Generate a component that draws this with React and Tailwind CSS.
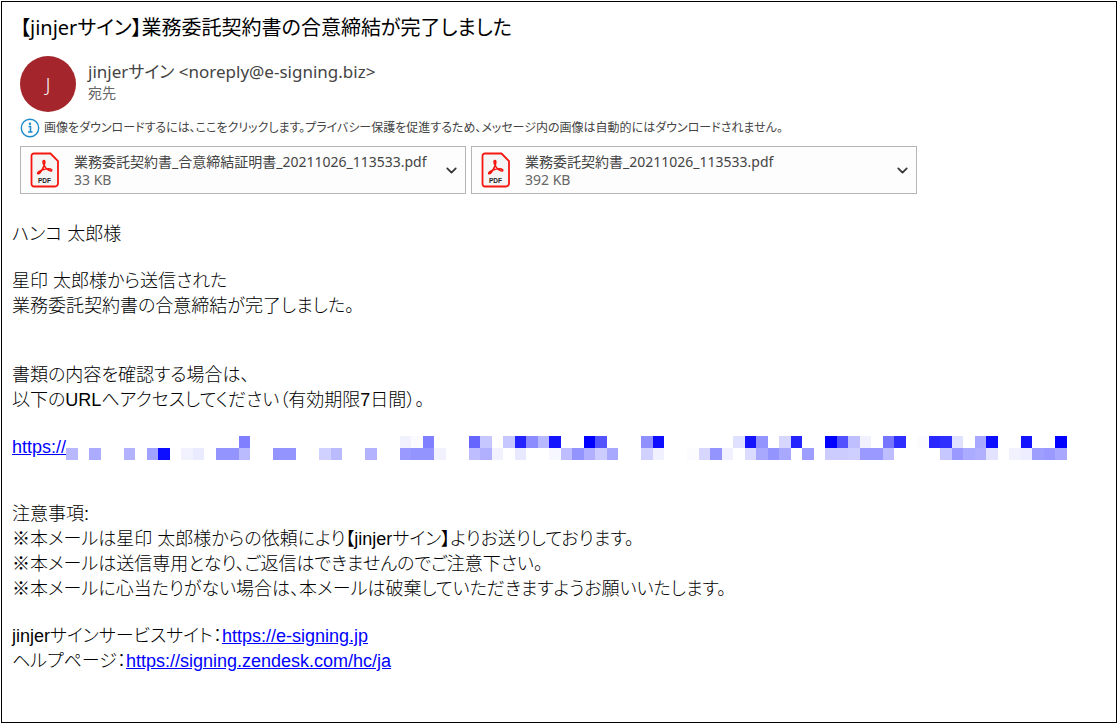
import { ChevronDown } from "lucide-react";

const attachments = [
    { name: "業務委託契約書_合意締結証明書_20211026_113533.pdf", size: "33 KB" },
    { name: "業務委託契約書_20211026_113533.pdf", size: "392 KB" },
];

// [column, opacity] for each masked cell of the signing URL
const maskTop = [
    [15, 0.5], [29, 0.05], [30, 0.02], [31, 0.5], [35, 0.6], [36, 0.22],
    [38, 0.22], [39, 0.86], [40, 0.45], [41, 0.28], [42, 0.92], [45, 1],
    [46, 0.67], [50, 0.44], [51, 0.95], [58, 0.12], [59, 0.92], [60, 0.42],
    [62, 0.16], [63, 0.86], [66, 1], [67, 0.68], [68, 0.25], [69, 0.06],
    [71, 0.54], [72, 0.82], [74, 0.01], [75, 0.84], [76, 0.82], [77, 0.12],
    [79, 0.34], [80, 0.95], [83, 0.92], [86, 1],
];

const maskBottom = [
    [0, 0.28], [2, 0.33], [5, 0.3], [7, 0.37], [8, 0.95], [10, 0.05],
    [11, 0.08], [13, 0.42], [14, 0.42], [15, 0.27], [18, 0.42], [19, 0.42],
    [22, 0.18], [23, 0.27], [26, 0.3], [29, 0.4], [30, 0.42], [31, 0.42],
    [32, 0.05], [35, 0.26], [36, 0.31], [37, 0.05], [39, 0.09], [42, 0.03],
    [43, 0.26], [44, 0.42], [45, 0.31], [46, 0.2], [47, 0.34], [50, 0.18],
    [51, 0.06], [54, 0.01], [55, 0.16], [56, 0.42], [57, 0.06], [59, 0.14],
    [60, 0.34], [61, 0.42], [62, 0.34], [64, 0.38], [66, 0.2], [67, 0.2],
    [68, 0.19], [69, 0.4], [70, 0.4], [71, 0.26], [76, 0.22], [77, 0.4],
    [78, 0.33], [79, 0.31], [80, 0.11], [82, 0.05], [83, 0.07], [84, 0.38],
    [85, 0.4], [86, 0.34],
];

const link = "text-[#0000ff] underline";

function PdfIcon() {
    return (
        <svg width="30" height="36" viewBox="0 0 30 36" fill="none" className="shrink-0" aria-hidden="true">
            <path
                d="M4 1.5h16.5L28 9v22.5a3 3 0 0 1-3 3H4a2.5 2.5 0 0 1-2.5-2.5V4A2.5 2.5 0 0 1 4 1.5Z"
                fill="#f5f5f5"
                stroke="#f5160f"
                strokeWidth="1.8"
            />
            <path
                d="M14 8.6c-1.6 0-1.2 2.6.6 5.6 1.6 2.7 4.6 5 6.4 4.8 1.6-.4.6-2.2-2.4-2.2-4 .1-9.6 1.9-10.8 3.9-.6 1.4 1.2 1.6 2.8-.7 2-2.9 4-7.2 4.200-9.600.1-1.200-.2-1.800-.8-1.800Z"
                stroke="#f5160f"
                strokeWidth="1.6"
                strokeLinejoin="round"
            />
            <text
                x="14.5"
                y="30.5"
                textAnchor="middle"
                fill="#222"
                fontSize="6.5"
                fontWeight="700"
                fontFamily="Liberation Sans, sans-serif"
            >
                PDF
            </text>
        </svg>
    );
}

function Attachment({ name, size }) {
    return (
        <li className="flex h-12 w-[446px] items-center border border-[#b5b5b5] bg-[#fdfdfd] pl-[9px]">
            <PdfIcon />
            <div className="ml-3.5 min-w-0 flex-1 pt-0.5 text-sm leading-[18px]">
                <p className="truncate text-[#444]">{name}</p>
                <p className="text-[#666]">{size}</p>
            </div>
            <button type="button" aria-label={`${name} のメニュー`} className="flex h-full w-7 items-center justify-center text-[#333]">
                <ChevronDown size={17} strokeWidth={2.4} />
            </button>
        </li>
    );
}

function MaskedUrl() {
    return (
        <svg
            viewBox="0 0 1001 24"
            className="h-6 w-[1001px] min-w-0"
            preserveAspectRatio="xMinYMid meet"
            fill="#0000ff"
            shapeRendering="crispEdges"
            aria-hidden="true"
        >
            {maskTop.map(([col, opacity]) => (
                <rect key={col} x={col * 11.5} y="0" width="11.5" height="12" opacity={opacity} />
            ))}
            {maskBottom.map(([col, opacity]) => (
                <rect key={col} x={col * 11.5} y="12" width="11.5" height="12" opacity={opacity} />
            ))}
        </svg>
    );
}

export default function App() {
    return (
        <div className="flex min-h-screen bg-white p-px">
            <article className="min-w-0 flex-1 border border-black">
                <header className="px-[18px] pt-2.5 font-['Noto_Sans','Noto_Sans_CJK_JP',sans-serif] [font-feature-settings:'palt']">
                    <h1 className="text-xl leading-8 text-black">【jinjerサイン】業務委託契約書の合意締結が完了しました</h1>

                    <div className="mt-3 flex gap-3">
                        <div className="flex size-14 shrink-0 items-center justify-center rounded-full bg-[#a4262c] text-lg font-light text-white">
                            J
                        </div>
                        <div className="pt-1">
                            <p className="text-[17px] leading-6 text-[#444]">jinjerサイン &lt;noreply@e-signing.biz&gt;</p>
                            <p className="text-sm leading-[18px] text-[#666]">宛先</p>
                        </div>
                    </div>

                    <button type="button" className="mt-1 flex items-center gap-1 text-left text-xs leading-6 text-[#444]">
                        <svg width="20" height="20" viewBox="0 0 20 20" fill="none" className="shrink-0" aria-hidden="true">
                            <circle cx="10" cy="10" r="8.7" stroke="#1e8bcd" strokeWidth="1.4" />
                            <path d="M8.5 8.5H10.5V14M8 14h4.5" stroke="#1e8bcd" strokeWidth="1.6" />
                            <circle cx="10" cy="5.8" r="1.2" fill="#1e8bcd" />
                        </svg>
                        <span>
                            画像をダウンロードするには、ここをクリックします。プライバシー保護を促進するため、メッセージ内の画像は自動的にはダウンロードされません。
                        </span>
                    </button>

                    <ul className="mt-1.5 flex flex-wrap gap-[5px]">
                        {attachments.map((file) => (
                            <Attachment key={file.name} {...file} />
                        ))}
                    </ul>
                </header>

                <div className="px-2.5 pt-7 pb-9 font-['Liberation_Sans','Noto_Sans_CJK_JP',sans-serif] text-lg leading-[25px] font-light text-black [font-feature-settings:'palt']">
                    <p>ハンコ 太郎様</p>

                    <p className="mt-[22px]">
                        星印 太郎様から送信された
                        <br />
                        業務委託契約書の合意締結が完了しました。
                    </p>

                    <p className="mt-11">
                        書類の内容を確認する場合は、
                        <br />
                        以下のURLへアクセスしてください（有効期限7日間）。
                    </p>

                    <p className="mt-[22px] flex items-center">
                        <a href="#sign" className={link}>https://</a>
                        <MaskedUrl />
                    </p>

                    <p className="mt-[42px]">
                        注意事項:
                        <br />
                        ※本メールは星印 太郎様からの依頼により【jinjerサイン】よりお送りしております。
                        <br />
                        ※本メールは送信専用となり、ご返信はできませんのでご注意下さい。
                        <br />
                        ※本メールに心当たりがない場合は、本メールは破棄していただきますようお願いいたします。
                    </p>

                    <p className="mt-[22px]">
                        jinjerサインサービスサイト：
                        <a href="https://e-signing.jp" className={link}>https://e-signing.jp</a>
                        <br />
                        ヘルプページ：
                        <a href="https://signing.zendesk.com/hc/ja" className={link}>https://signing.zendesk.com/hc/ja</a>
                    </p>
                </div>
            </article>
        </div>
    );
}
